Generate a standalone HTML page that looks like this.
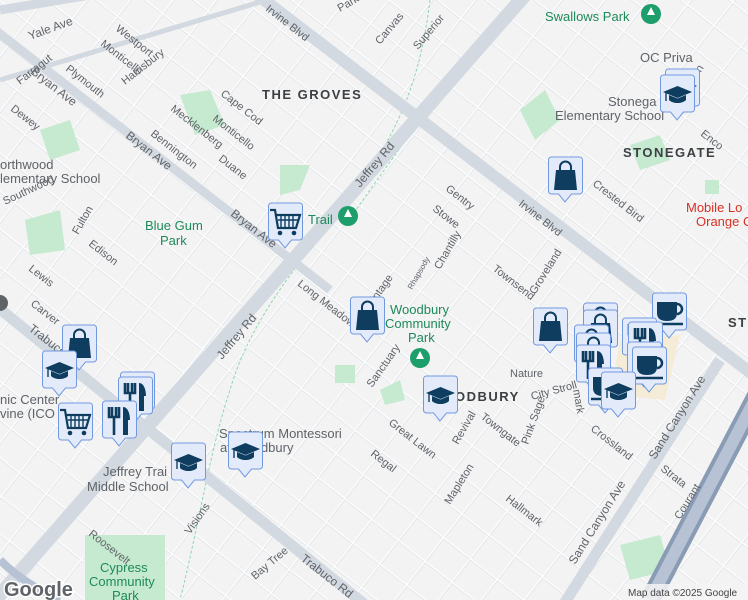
<!DOCTYPE html>
<html><head><meta charset="utf-8"><style>
html,body{margin:0;padding:0;width:748px;height:600px;overflow:hidden;background:#f3f3f4}
svg{position:absolute;left:0;top:0}
.t{font-family:"Liberation Sans",sans-serif;fill:#5f6368;font-size:11px}
.n{font-family:"Liberation Sans",sans-serif;fill:#3c4043;font-size:13px;font-weight:bold;letter-spacing:1.5px}
.p{font-family:"Liberation Sans",sans-serif;fill:#1e8a5a;font-size:13px}
.s{font-family:"Liberation Sans",sans-serif;fill:#5f6368;font-size:13px}
</style></head><body>
<svg width="748" height="600" viewBox="0 0 748 600">
<defs>
<pattern id="g" width="34" height="30" patternUnits="userSpaceOnUse" patternTransform="rotate(38)">
<rect width="34" height="30" fill="none"/>
<path d="M0 0H34M0 0V30" stroke="#dde1e6" stroke-width="4"/>
<path d="M0 0H34M0 0V30" stroke="#fff" stroke-width="2.4"/>
</pattern>
<g id="mk"><path d="M0.5 3a3 3 0 0 1 3-3h28a3 3 0 0 1 3 3v31a3 3 0 0 1-3 3h-8l-6.5 8-6.5-8h-7a3 3 0 0 1-3-3z" fill="#e3ebfa" stroke="#7199e0" stroke-width="1"/></g>
<g id="bag"><use href="#mk"/><path d="M8 13h19l2 20H6z" fill="#0e3d60"/><path d="M12 14v-4a5.5 5.5 0 0 1 11 0v4" fill="none" stroke="#0e3d60" stroke-width="2"/></g>
<g id="cap"><use href="#mk"/><path d="M3 17l14.5-6 14.5 6-14.5 6z" fill="#0e3d60"/><path d="M9 20v5c4 4 13 4 17 0v-5l-8.5 3.5z" fill="#0e3d60"/><path d="M6 18v8" stroke="#0e3d60" stroke-width="1.4"/></g>
<g id="cart"><use href="#mk"/><path d="M2 7h5l3 18h18l4-13H8" fill="none" stroke="#0e3d60" stroke-width="2.2"/><path d="M10 17h20M13 12v13M17 12v13M21 12v13M25 12v13" stroke="#0e3d60" stroke-width="1.4"/><circle cx="12" cy="30" r="2.3" fill="#0e3d60"/><circle cx="26" cy="30" r="2.3" fill="#0e3d60"/></g>
<g id="fork"><use href="#mk"/><path d="M7 6v10h10V6M10 6v9M14 6v9M12 15v19" stroke="#0e3d60" stroke-width="2.6" fill="none"/><path d="M21 6c5 0 7 7 7 13h-2v15h-5z" fill="#0e3d60"/></g>
<g id="cup"><use href="#mk"/><path d="M5 9h20v11c0 6-4 8-10 8S5 26 5 20z" fill="#0e3d60"/><path d="M25 11a5 5 0 0 1 0 10" fill="none" stroke="#0e3d60" stroke-width="2.5"/><path d="M3 31h28" stroke="#0e3d60" stroke-width="2.5"/></g>
</defs>
<rect width="748" height="600" fill="#f3f3f4"/>
<rect width="748" height="600" fill="url(#g)"/>
<!-- parks -->
<g fill="#c6ead0">
<rect x="85" y="535" width="80" height="65"/>
<polygon points="180,95 210,90 225,125 195,135"/>
<polygon points="520,110 545,90 560,120 535,140"/>
<polygon points="630,145 660,135 670,160 640,170"/>
<polygon points="40,130 70,120 80,150 50,160"/>
<polygon points="25,220 60,210 65,250 30,255"/>
<rect x="335" y="365" width="20" height="18"/>
<polygon points="620,545 660,535 670,570 630,580"/>
<rect x="705" y="180" width="14" height="14"/>
<polygon points="280,165 310,165 300,190 280,195"/>
<polygon points="380,390 400,380 405,400 385,405"/>
</g>
<polygon points="620,340 680,335 665,400 610,395" fill="#f4ecd6"/>
<!-- trails -->
<g fill="none" stroke="#8fd6b0" stroke-width="1" stroke-dasharray="3 2">
<path d="M430 0C420 80 400 130 350 200 300 260 250 320 230 390 210 450 200 520 180 600"/>
<path d="M345 225L420 120"/>
</g>
<!-- major roads -->
<g stroke="#d2d9e0" stroke-linecap="butt" fill="none">
<path d="M-9 605L525 -5" stroke-width="14"/>
<path d="M225 -30L760 380" stroke-width="12"/>
<path d="M-5 305L390 625" stroke-width="11"/>
<path d="M-5 30L330 290" stroke-width="9"/>
<path d="M0 10L90 -5" stroke-width="9"/>
<path d="M560 610L720 360" stroke-width="11"/>
<path d="M0 80L300 -10" stroke-width="5"/>
</g>
<path d="M650 600L760 390" stroke="#8a9bb4" stroke-width="20"/>
<path d="M650 600L760 390" stroke="#b7c3d4" stroke-width="12"/>
<path d="M0 560C20 580 40 590 60 600" stroke="#b7c3d4" stroke-width="8" fill="none"/>
<!-- labels -->
<text class="n" x="262" y="99">THE GROVES</text>
<text class="n" x="623" y="157">STONEGATE</text>
<text class="n" x="728" y="327">ST</text>
<text class="n" x="455" y="401">ODBURY</text>
<text class="p" x="545" y="21">Swallows Park</text>
<text class="s" x="640" y="62">OC Priva</text>
<text class="s" x="608" y="106">Stonega</text>
<text class="s" x="555" y="120">Elementary School</text>
<text x="686" y="212" style="font:13px 'Liberation Sans',sans-serif;fill:#d93025">Mobile Lo</text>
<text x="696" y="226" style="font:13px 'Liberation Sans',sans-serif;fill:#d93025">Orange C</text>
<text class="p" x="145" y="230">Blue Gum</text>
<text class="p" x="160" y="245">Park</text>
<text class="p" x="308" y="224">Trail</text>
<text class="p" x="390" y="314">Woodbury</text>
<text class="p" x="385" y="328">Community</text>
<text class="p" x="408" y="342">Park</text>
<text class="p" x="100" y="572">Cypress</text>
<text class="p" x="89" y="586">Community</text>
<text class="p" x="112" y="600">Park</text>
<text class="s" x="0" y="183">lementary School</text>
<text class="s" x="0" y="169">orthwood</text>
<text class="s" x="0" y="404">nic Center</text>
<text class="s" x="0" y="418">vine (ICO</text>
<text class="s" x="103" y="476">Jeffrey Trai</text>
<text class="s" x="87" y="491">Middle School</text>
<text class="s" x="219" y="438">Spectrum Montessori</text>
<text class="s" x="220" y="452">at Woodbury</text>
<g class="t">
<text transform="translate(265,10) rotate(38)">Irvine Blvd</text>
<text transform="translate(518,205) rotate(38)">Irvine Blvd</text>
<text transform="translate(360,188) rotate(-50)" font-size="12">Jeffrey Rd</text>
<text transform="translate(222,360) rotate(-50)" font-size="12">Jeffrey Rd</text>
<text transform="translate(420,0) rotate(-50)" font-size="12">Jeffr</text>
<text transform="translate(125,137) rotate(38)" font-size="12">Bryan Ave</text>
<text transform="translate(230,215) rotate(38)" font-size="12">Bryan Ave</text>
<text transform="translate(30,73) rotate(38)" font-size="12">Bryan Ave</text>
<text transform="translate(28,330) rotate(38)" font-size="12">Trabuco</text>
<text transform="translate(300,560) rotate(38)" font-size="12">Trabuco Rd</text>
<text transform="translate(575,565) rotate(-58)" font-size="12">Sand Canyon Ave</text>
<text transform="translate(655,460) rotate(-58)" font-size="12">Sand Canyon Ave</text>
<text transform="translate(30,40) rotate(-20)" font-size="12">Yale Ave</text>
<text transform="translate(115,30) rotate(38)">Westport</text>
<text transform="translate(100,45) rotate(38)">Monticello</text>
<text transform="translate(65,70) rotate(38)">Plymouth</text>
<text transform="translate(125,85) rotate(-38)">Harrisbury</text>
<text transform="translate(20,85) rotate(-38)">Farragut</text>
<text transform="translate(10,110) rotate(38)">Dewey</text>
<text transform="translate(212,120) rotate(38)">Monticello</text>
<text transform="translate(220,95) rotate(38)">Cape Cod</text>
<text transform="translate(170,110) rotate(38)">Mecklenberg</text>
<text transform="translate(150,135) rotate(38)">Bennington</text>
<text transform="translate(218,160) rotate(38)">Duane</text>
<text transform="translate(5,205) rotate(-25)">Southwood</text>
<text transform="translate(78,235) rotate(-60)">Fulton</text>
<text transform="translate(88,245) rotate(38)">Edison</text>
<text transform="translate(28,270) rotate(38)">Lewis</text>
<text transform="translate(30,305) rotate(38)">Carver</text>
<text transform="translate(340,12) rotate(-30)">Parkwood</text>
<text transform="translate(380,45) rotate(-50)">Canvas</text>
<text transform="translate(418,50) rotate(-50)">Superior</text>
<text transform="translate(445,190) rotate(38)">Gentry</text>
<text transform="translate(432,210) rotate(38)">Stowe</text>
<text transform="translate(440,270) rotate(-60)">Chantilly</text>
<text transform="translate(492,270) rotate(38)">Townsend</text>
<text transform="translate(535,295) rotate(-58)">Groveland</text>
<text transform="translate(592,185) rotate(38)">Crested Bird</text>
<text transform="translate(682,103) rotate(-58)">Paragon</text>
<text transform="translate(700,135) rotate(38)">Enco</text>
<text transform="translate(297,285) rotate(38)">Long Meadow</text>
<text transform="translate(372,308) rotate(-55)">Vintage</text>
<text transform="translate(412,290) rotate(-60)" font-size="8">Rhapsody</text>
<text transform="translate(372,388) rotate(-55)">Sanctuary</text>
<text transform="translate(388,424) rotate(38)">Great Lawn</text>
<text transform="translate(458,445) rotate(-60)">Revival</text>
<text transform="translate(480,418) rotate(38)">Towngate</text>
<text transform="translate(510,377) rotate(0)">Nature</text>
<text transform="translate(532,400) rotate(-15)">City Stroll</text>
<text transform="translate(528,445) rotate(-70)">Pink Sage</text>
<text transform="translate(573,390) rotate(80)">mark</text>
<text transform="translate(590,430) rotate(38)">Crossland</text>
<text transform="translate(660,470) rotate(38)">Strata</text>
<text transform="translate(680,520) rotate(-58)">Courant</text>
<text transform="translate(370,455) rotate(38)">Regal</text>
<text transform="translate(450,505) rotate(-58)">Mapleton</text>
<text transform="translate(505,500) rotate(38)">Hallmark</text>
<text transform="translate(88,535) rotate(38)">Roosevelt</text>
<text transform="translate(190,535) rotate(-55)">Visions</text>
<text transform="translate(255,580) rotate(-40)">Bay Tree</text>
</g>
<!-- park pins -->
<g><circle cx="348" cy="216" r="10" fill="#1e9e6a"/><circle cx="420" cy="358" r="10" fill="#1e9e6a"/><circle cx="651" cy="14" r="10" fill="#1e9e6a"/>
<path d="M348 209l-4 8h8zM420 351l-4 8h8zM651 7l-4 8h8z" fill="#fff"/></g>
<circle cx="0" cy="303" r="8" fill="#5f6368"/>
<!-- markers -->
<use href="#cap" x="665" y="69"/><use href="#cap" x="660" y="75"/>
<use href="#bag" x="548" y="157"/>
<use href="#cart" x="268" y="203"/>
<use href="#bag" x="350" y="297"/>
<use href="#bag" x="62" y="325"/>
<use href="#cap" x="42" y="351"/>
<use href="#fork" x="120" y="372"/><use href="#fork" x="118" y="377"/>
<use href="#cart" x="58" y="403"/>
<use href="#fork" x="102" y="401"/>
<use href="#cap" x="171" y="443"/>
<use href="#cap" x="228" y="432"/>
<use href="#cap" x="423" y="376"/>
<use href="#bag" x="533" y="308"/>
<use href="#bag" x="583" y="303"/><use href="#bag" x="583" y="310"/>
<use href="#cup" x="652" y="293"/>
<use href="#fork" x="622" y="318"/><use href="#fork" x="628" y="322"/>
<use href="#bag" x="574" y="325"/><use href="#bag" x="576" y="333"/>
<use href="#fork" x="576" y="345"/>
<use href="#cup" x="627" y="342"/><use href="#cup" x="632" y="347"/>
<use href="#cup" x="588" y="368"/>
<use href="#cap" x="601" y="372"/>
<!-- attribution -->
<text x="4" y="596" style="font:bold 20px 'Liberation Sans',sans-serif;fill:#5f6368;stroke:#fff;stroke-width:3px;paint-order:stroke">Google</text>
<rect x="624" y="584" width="124" height="16" fill="#f3f3f4" opacity="0.85"/>
<text x="628" y="596" style="font:10px 'Liberation Sans',sans-serif;fill:#444">Map data ©2025 Google</text>
</svg>
</body></html>
